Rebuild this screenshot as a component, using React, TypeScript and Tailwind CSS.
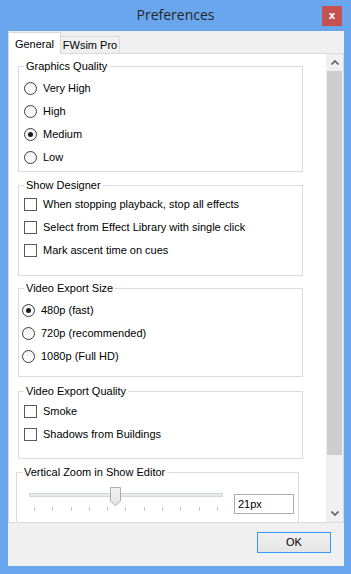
import { ReactNode } from 'react'

const ui = "font-['Liberation_Sans',Arial,sans-serif] text-[11px] text-black"

function Radio({ label, checked, shift }: { label: string; checked?: boolean; shift?: boolean }) {
  return (
    <div className="flex h-[23px] items-center">
      <span
        className={`${shift ? 'ml-[3px]' : 'ml-[5px]'} flex h-[13px] w-[13px] items-center justify-center rounded-full border border-[#3c3c3c] bg-gradient-to-b from-[#f2f2f2] to-white`}
      >
        {checked && <span className="h-[5px] w-[5px] rounded-full bg-[#1a1a1a]" />}
      </span>
      <span className="ml-[6px]">{label}</span>
    </div>
  )
}

function Check({ label }: { label: string }) {
  return (
    <div className="flex h-[23px] items-center">
      <span className="ml-[5px] h-[13px] w-[13px] border border-[#5a5a5a] bg-white" />
      <span className="ml-[6px]">{label}</span>
    </div>
  )
}

function Group({ title, className, children }: { title: string; className: string; children: ReactNode }) {
  return (
    <fieldset className={`border border-[#dcdcdc] ${className}`}>
      <legend className="ml-[5px] px-[2px] leading-[16px]">{title}</legend>
      {children}
    </fieldset>
  )
}

function Chevron({ up }: { up?: boolean }) {
  return (
    <svg width="8" height="5" viewBox="0 0 8 5" className={up ? '' : 'rotate-180'}>
      <path d="M0.5 4.5 L4 1 L7.5 4.5" fill="none" stroke="#606060" strokeWidth="1.6" />
    </svg>
  )
}

const ticks = Array.from({ length: 11 }, (_, i) => i)

export default function App() {
  return (
    <div className={`flex h-[574px] w-[351px] flex-col bg-[#6aa6ee] pb-[8px] pl-[8px] pr-[7px] ${ui}`}>
      {/* title bar */}
      <div className="-ml-[8px] -mr-[7px] grid h-[31px] grid-cols-[1fr_auto_1fr] items-start">
        <div />
        <div className="mt-[5px] font-['Open_Sans',sans-serif] text-[14px] leading-[20px] text-[#262626]">Preferences</div>
        <div className="flex justify-end pr-[9px] pt-[6px]">
          <div className="flex h-[20px] w-[20px] items-center justify-center bg-[#c75050] font-['DejaVu_Sans',sans-serif] text-[10px] font-bold leading-none text-white">
            x
          </div>
        </div>
      </div>

      {/* client */}
      <div className="flex flex-1 flex-col bg-[#f0f0f0]">
        {/* tabs */}
        <div className="flex items-end pt-[1px]">
          <div className="relative z-10 -mb-[1px] flex h-[22px] w-[53px] items-start justify-center border-l border-r border-t border-[#d9d9d9] bg-white pt-[3px]">
            General
          </div>
          <div className="flex h-[17px] w-[59px] items-center justify-center border-r border-t border-[#d9d9d9] bg-[#f0f0f0] pt-[1px]">
            FWsim Pro
          </div>
        </div>

        {/* panel */}
        <div className="flex h-[470px] border border-[#d9d9d9] bg-white">
          <div className="flex-1 overflow-hidden">
            <Group title="Graphics Quality" className="ml-[9px] mt-[4px] w-[285px] pb-[2px] pt-[3px]">
              <Radio label="Very High" />
              <Radio label="High" />
              <Radio label="Medium" checked />
              <Radio label="Low" />
            </Group>

            <Group title="Show Designer" className="ml-[9px] mt-[5px] w-[285px] pb-[13px]">
              <Check label="When stopping playback, stop all effects" />
              <Check label="Select from Effect Library with single click" />
              <Check label="Mark ascent time on cues" />
            </Group>

            <Group title="Video Export Size" className="ml-[9px] mt-[4px] w-[285px] pb-[8px] pt-[3px]">
              <Radio label="480p (fast)" checked shift />
              <Radio label="720p (recommended)" shift />
              <Radio label="1080p (Full HD)" shift />
            </Group>

            <Group title="Video Export Quality" className="ml-[9px] mt-[6px] w-[285px] pb-[12px] pt-[1px]">
              <Check label="Smoke" />
              <Check label="Shadows from Buildings" />
            </Group>

            <Group title="Vertical Zoom in Show Editor" className="ml-[7px] mt-[5px] w-[283px] pb-[10px]">
              <div className="flex items-start">
                <div className="relative ml-[12px] mt-[7px] h-[26px] w-[194px]">
                  <div className="absolute left-0 right-0 top-[6px] h-[4px] border border-[#d6d6d6] bg-[#e7eaea]" />
                  <svg width="11" height="19" viewBox="0 0 11 19" className="absolute left-[81px] top-0">
                    <defs>
                      <linearGradient id="thumb" x1="0" y1="0" x2="0" y2="1">
                        <stop offset="0" stopColor="#f3f3f3" />
                        <stop offset="1" stopColor="#e2e2e2" />
                      </linearGradient>
                    </defs>
                    <path d="M0.5 0.5 H10.5 V14 L5.5 18.5 L0.5 14 Z" fill="url(#thumb)" stroke="#acacac" />
                  </svg>
                  <div className="absolute left-0 right-0 top-[20px] flex justify-between px-[5px]">
                    {ticks.map(i => (
                      <span key={i} className="h-[4px] w-[1px] bg-[#c4c4c4]" />
                    ))}
                  </div>
                </div>
                <div className="ml-[11px] mt-[14px] flex h-[20px] w-[60px] items-center border border-[#abadb3] bg-white pl-[3px]">
                  21px
                </div>
              </div>
            </Group>
          </div>

          {/* scrollbar */}
          <div className="flex w-[17px] flex-col bg-[#f0f0f0]">
            <div className="flex h-[17px] items-center justify-center">
              <Chevron up />
            </div>
            <div className="mx-[1px] h-[384px] bg-[#cdcdcd]" />
            <div className="flex-1" />
            <div className="flex h-[17px] items-center justify-center">
              <Chevron />
            </div>
          </div>
        </div>

        {/* footer */}
        <div className="flex flex-1 items-start justify-end pr-[13px] pt-[9px]">
          <button className="flex h-[21px] w-[74px] items-center justify-center border border-[#3399ff] bg-gradient-to-b from-[#f0f0f0] to-[#e5e5e5]">
            OK
          </button>
        </div>
      </div>
    </div>
  )
}
